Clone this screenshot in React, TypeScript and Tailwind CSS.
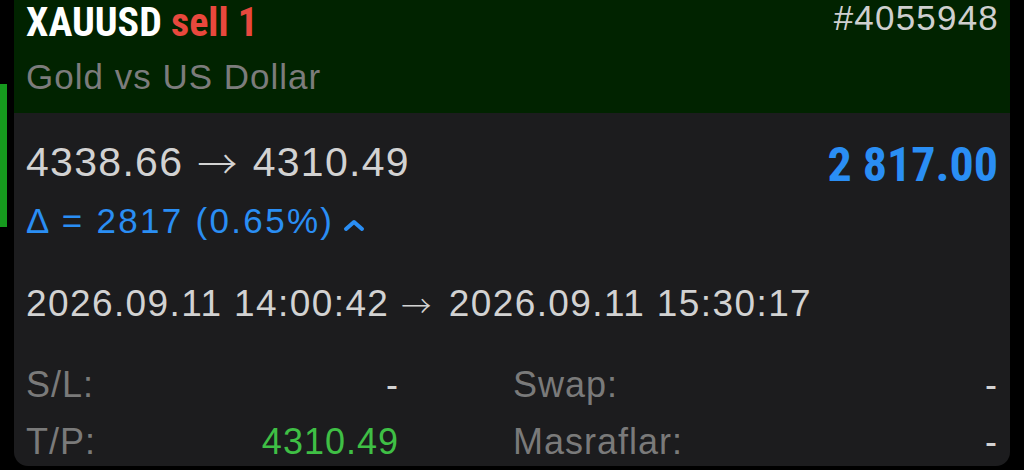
import React from "react";

const condensed = { fontFamily: '"Liberation Sans Narrow", "Roboto Condensed", "Arial Narrow", sans-serif' };
const arrowFont = { fontFamily: '"Noto Sans CJK JP", "DejaVu Sans", sans-serif' };

export default function App() {
  return (
    <div className="w-[1024px] h-[470px] bg-black flex overflow-hidden" style={{ fontFamily: '"Liberation Sans", Arial, sans-serif' }}>
      <div className="w-[14px] shrink-0">
        <div className="mt-[84px] w-[7px] h-[143px] bg-[#169a1e]" />
      </div>
      <div className="w-[996px] h-[466px] bg-[#1c1c1e] rounded-b-[14px] overflow-hidden flex flex-col">
        <div className="h-[113px] bg-[#012300] px-3 flex flex-col">
          <div className="flex justify-between items-start">
            <div className="text-[40px] leading-[46px] font-bold" style={condensed}>
              <span className="text-white">XAUUSD</span>{" "}
              <span className="text-[#e8483d]">sell 1</span>
            </div>
            <div className="text-[35px] leading-[36px] tracking-[1.2px] text-[#cfcfcf] mr-[-1px]">#4055948</div>
          </div>
          <div className="text-[35px] leading-[40px] tracking-[1px] text-[#7c7c7c] mt-[11px]">Gold vs US Dollar</div>
        </div>
        <div className="px-3 flex flex-col">
          <div className="flex justify-between items-center mt-[22px]">
            <div className="text-[41px] leading-[42px] tracking-[1.3px] text-[#d2d2d2] flex items-center">
              <span>4338.66</span>
              <span className="mx-[14px] text-[40px] font-light" style={arrowFont}>→</span>
              <span>4310.49</span>
            </div>
            <div className="text-[48px] leading-[48px] font-bold text-[#2a8ef4] mt-[6px]" style={condensed}>2 817.00</div>
          </div>
          <div className="flex items-center text-[35px] leading-[40px] tracking-[2.3px] text-[#2a8ef4] mt-[12px]">
            <span>Δ = 2817 (0.65%)</span>
            <svg width="22" height="14" viewBox="0 0 22 14" className="ml-[9px] mt-[8px]">
              <path d="M3 11 L11 4 L19 11" fill="none" stroke="#2a8ef4" strokeWidth="4" strokeLinecap="round" strokeLinejoin="round" />
            </svg>
          </div>
          <div className="text-[37px] leading-[40px] tracking-[1.4px] text-[#d2d2d2] mt-[43px] flex items-center">
            <span>2026.09.11 14:00:42</span>
            <span className="ml-[12px] mr-[16px] text-[30px] font-light" style={arrowFont}>→</span>
            <span>2026.09.11 15:30:17</span>
          </div>
          <div className="flex mt-[47px] text-[36px] leading-[28px] tracking-[1px]">
            <div className="w-[373px] flex flex-col gap-[29px]">
              <div className="flex justify-between"><span className="text-[#7a7a7a]">S/L:</span><span className="text-[#d2d2d2]">-</span></div>
              <div className="flex justify-between"><span className="text-[#7a7a7a]">T/P:</span><span className="text-[#3fbf45]">4310.49</span></div>
            </div>
            <div className="ml-[114px] flex-1 flex flex-col gap-[29px]">
              <div className="flex justify-between"><span className="text-[#7a7a7a]">Swap:</span><span className="text-[#d2d2d2]">-</span></div>
              <div className="flex justify-between"><span className="text-[#7a7a7a]">Masraflar:</span><span className="text-[#d2d2d2]">-</span></div>
            </div>
          </div>
        </div>
      </div>
    </div>
  );
}
